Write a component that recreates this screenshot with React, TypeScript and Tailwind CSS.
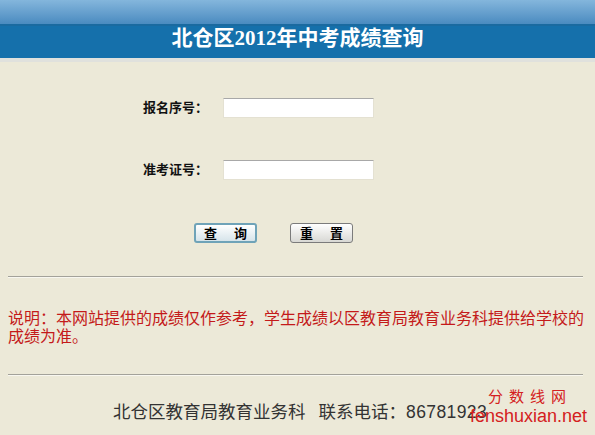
export default function App() {
  return (
    <div className="relative w-[595px] h-[435px] overflow-hidden bg-[#ece9d8] font-['Liberation_Sans','Noto_Sans_CJK_SC',sans-serif]">
      <header>
        <div className="h-[24px] bg-linear-to-b from-[#84b6dc] to-[#4a8bc0]" />
        <div className="h-[34px] bg-[#1570ab] flex items-center justify-center pb-2 border-t-2 border-[#1a6aa0]">
          <h1 className="text-white font-bold text-[21px] leading-none font-['Liberation_Serif','Noto_Sans_CJK_SC',serif]">
            北仓区2012年中考成绩查询
          </h1>
        </div>
        <div className="h-[4px] bg-[#e0e1dd]" />
      </header>

      <form className="pl-[143px] pt-[36px]">
        <div className="flex items-center h-[20px]">
          <label className="w-[80px] text-[13px] font-bold text-[#111]">报名序号：</label>
          <input className="w-[151px] h-[20px] bg-white border border-[#e4e1d2] border-t-[#a8a8a8] outline-none" />
        </div>
        <div className="flex items-center h-[20px] mt-[42px]">
          <label className="w-[80px] text-[13px] font-bold text-[#111]">准考证号：</label>
          <input className="w-[151px] h-[20px] bg-white border border-[#e4e1d2] border-t-[#a8a8a8] outline-none" />
        </div>
        <div className="flex mt-[43px] pl-[51px] gap-[33px]">
          <button
            type="button"
            className="w-[63px] h-[20px] flex items-center justify-center gap-[17px] rounded-[3px] border-2 border-[#6fa3b8] bg-linear-to-b from-white to-[#d6e4ea] text-[13px] font-bold text-black leading-none"
          >
            <span>查</span>
            <span>询</span>
          </button>
          <button
            type="button"
            className="w-[63px] h-[20px] flex items-center justify-center gap-[17px] rounded-[3px] border border-[#7b7b7b] bg-linear-to-b from-white to-[#d8d8d4] text-[13px] font-bold text-black leading-none"
          >
            <span>重</span>
            <span>置</span>
          </button>
        </div>
      </form>

      <div className="ml-[8px] mr-[12px] mt-[33px] border-t border-b border-t-[#a3a29a] border-b-[#f8f7f0]" />

      <p className="px-[8px] mt-[32px] text-[16px] leading-[18px] text-[#c41a1a]">
        说明：本网站提供的成绩仅作参考，学生成绩以区教育局教育业务科提供给学校的成绩为准。
      </p>

      <div className="ml-[8px] mr-[12px] mt-[28px] border-t border-b border-t-[#a3a29a] border-b-[#f8f7f0]" />

      <p className="flex pl-[113px] mt-[26px] text-[17.5px] leading-[20px] text-[#333]">
        <span>北仓区教育局教育业务科</span>
        <span className="ml-[13px]">联系电话：</span>
        <span className="tracking-[0.4px]">86781923</span>
      </p>

      <div className="absolute left-[470px] top-[389px] text-[#d42020] leading-none">
        <div className="pl-[18px] text-[15px] tracking-[6px]">分数线网</div>
        <div className="mt-[3px] text-[18px] font-['Liberation_Sans',sans-serif]">fenshuxian.net</div>
      </div>
    </div>
  );
}
